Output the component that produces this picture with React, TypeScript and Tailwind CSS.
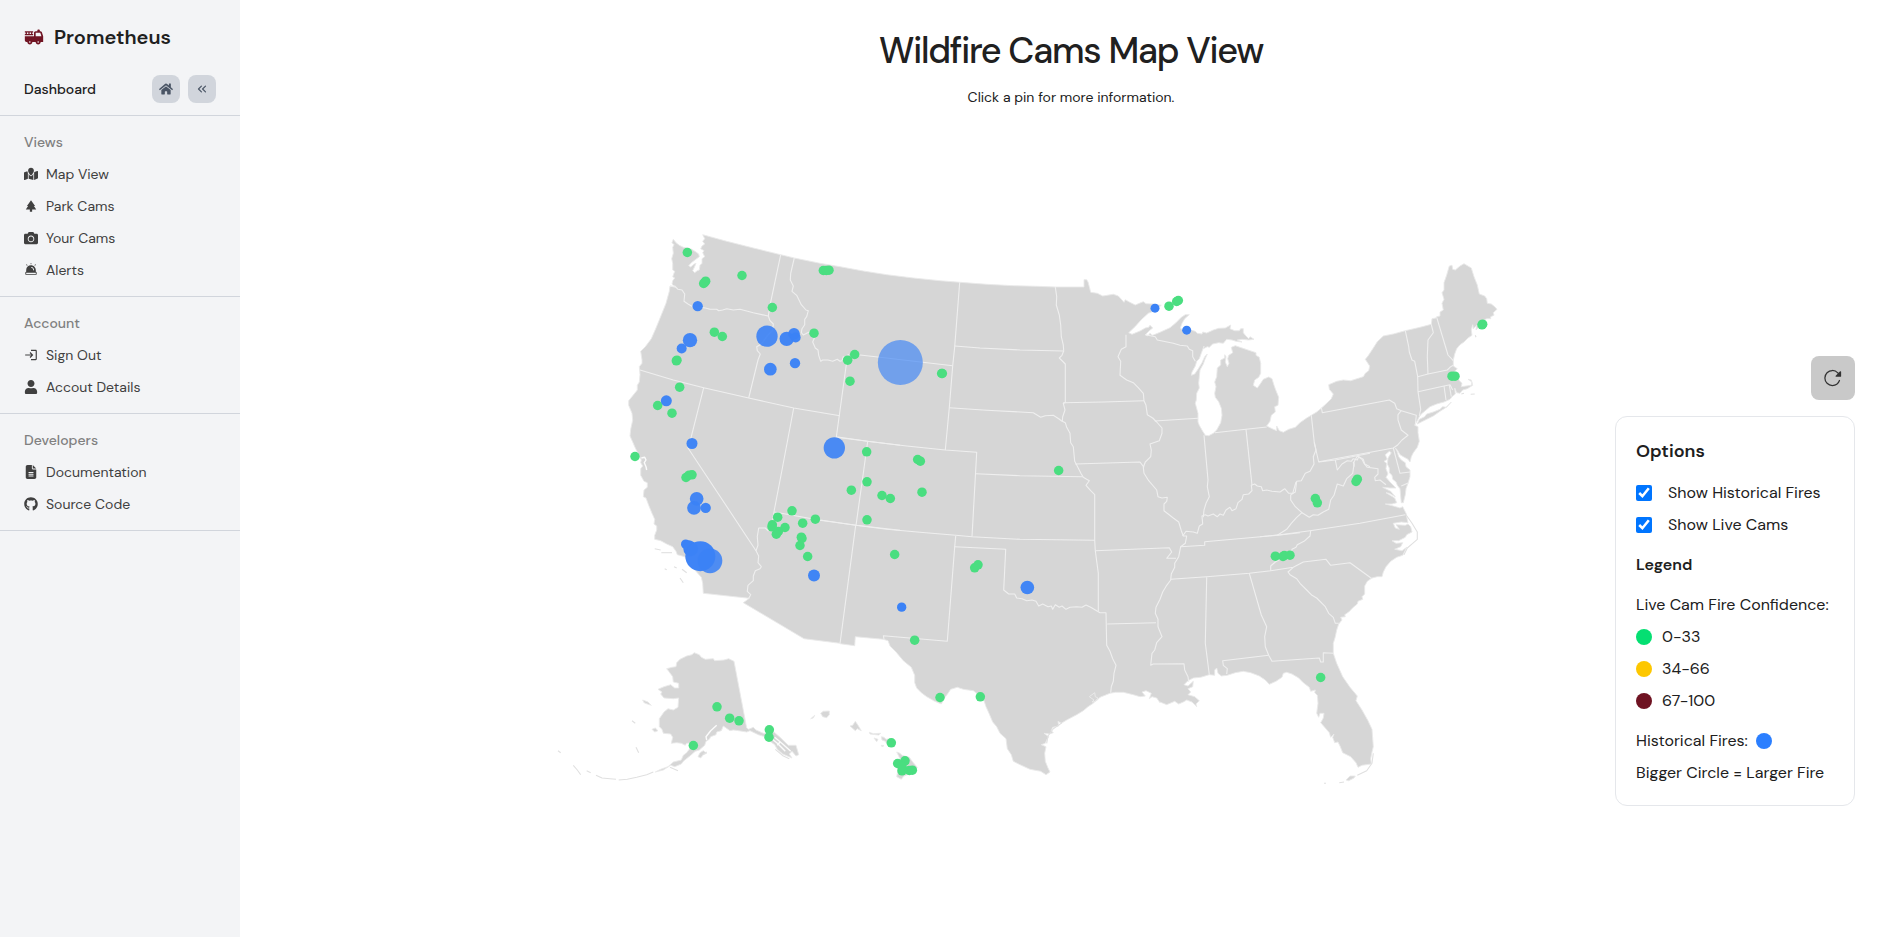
import type { ReactNode } from "react";
import type { IconType } from "react-icons";
import { FaCamera, FaGithub, FaHome, FaUser } from "react-icons/fa";
import { FaFileLines, FaMapLocation } from "react-icons/fa6";
import { FiChevronsLeft } from "react-icons/fi";
import { IoReload } from "react-icons/io5";
import { MdFireTruck, MdLogin, MdPark } from "react-icons/md";
import { PiSirenFill } from "react-icons/pi";

/* ---------- Map geometry ---------- */

// Survey tiles: every tile has its own origin on the map and stores
// coordinates at three units per map unit.
const TILES = {
  A: [540, 220],
  B: [540, 450],
  C: [820, 250],
  D: [820, 520],
  E: [1070, 260],
  F: [1260, 250],
  G: [1160, 500],
  H: [960, 280],
} as const;

type Tile = keyof typeof TILES;
type Run = [Tile, string];

function project(tile: Tile, x: number, y: number): [number, number] {
  const [ox, oy] = TILES[tile];
  return [ox + x / 3, oy + y / 3];
}

function toPath(runs: Run[], closed = false): string {
  const pts = runs.flatMap(([tile, s]) =>
    s.trim().split(/\s+/).map((p) => {
      const [x, y] = p.split(",").map(Number);
      return project(tile, x, y).map((v) => v.toFixed(1)).join(" ");
    })
  );
  return "M" + pts.join("L") + (closed ? "Z" : "");
}

const MAINLAND: Run[] = [
  ["A", "400,58 408,68 418,76 430,82 442,84 455,88 468,96 476,102 478,110 466,119 454,128 446,137 452,141 463,132 468,130 462,144 458,152 464,158 472,152 478,150 480,136 486,130 486,116 494,110 488,98 492,92 482,86 486,78 494,72 488,64 494,56 488,44 560,64 640,84 722,104 763,114 836,129"],
  ["C", "0,40 60,50 130,63 200,74 280,84 360,92 420,97 500,103 580,107 650,109 706,111 792,111 792,89 800,89 804,96 808,110 812,127 832,130 848,138 862,136 880,133 895,138 906,150 912,157 916,149 928,156 946,165 958,160 970,155 978,161 1000,162 1024,166 1000,184 985,190 965,208 945,230 926,248 936,253 960,243 976,234 986,232 990,226 998,234 988,242 976,254 984,258 990,250 996,256"],
  ["E", "250,225 270,217 300,203 318,188 334,172 346,164 358,164 344,176 336,190 331,204 338,210 362,210 376,214 382,220 396,222 398,216 410,219 430,210 446,205 466,204 482,195 480,206 494,212 508,212 512,206 520,206 520,218 526,226 536,236 540,230 552,238 536,240 516,238 502,240 516,246 498,244 486,240 470,238 460,250 446,248 428,252 418,262 412,260 400,266 402,258 394,280 388,296 380,304 376,318 366,336 364,346 374,342 384,328 396,308 404,290 412,282 404,300 400,312 390,330 388,350 386,370 388,384 380,400 379,420 376,430 384,460 384,486 388,496 398,514 406,526 416,527 430,520 440,510 452,488 456,466 454,445 446,425 436,412 434,400 438,380 434,366 440,350 442,324 452,315 452,300 464,294 464,284 468,290 466,306 472,320 477,310 473,296 476,286 488,278 484,262 496,257 510,262 540,272 558,278 558,286 568,292 572,310 572,340 566,352 554,360 550,376 562,384 572,370 580,358 596,351 606,356 612,376 618,392 626,412 624,436 614,440 616,456 604,466 600,484 590,498 606,506 620,512 620,498 628,512 640,517 656,508 676,502 690,488 710,474 724,466 740,456 752,446 770,430 784,416 790,402"],
  ["F", "208,418 206,404 230,394 250,390 272,392 298,384 310,380 316,370 326,362 329,348 316,328 324,318 336,300 352,275 370,258 400,252 436,242 480,232 514,223 516,206 528,204 530,200 540,198 540,186 550,180 546,160 552,148 546,128 552,120 552,98 560,75 568,48 576,46 578,58 586,60 600,48 612,41 634,54 642,80 652,105 658,132 674,138 680,146 682,160 694,162 704,170 711,178 700,188 702,196 692,200 692,206 680,206 664,214 656,232 648,240 650,226 640,236 638,224 634,240 636,256 624,264 612,276 600,284 590,296 584,312 580,330 580,348 592,356 584,364 596,376 596,390 606,400 604,410 618,408 634,406 636,396 624,388 634,390 638,406 622,416 608,420 600,430 590,428 584,414 586,432 576,440 570,448 552,456 530,462 510,470 496,482 484,492 478,500 472,512 464,526 474,530 474,548 478,574 472,592 460,608 454,620 450,636 444,628 430,620 420,614 412,600 406,594 412,606 416,620 424,630 436,638 438,650 450,660 450,680 444,700 438,716 436,734 430,758 424,758 422,740 420,716 412,706 408,696 398,688 396,676 388,668 388,654 382,642 384,624 394,608 388,604 376,614 382,628 372,634 380,640 378,656 384,672 378,682 390,696 400,706 408,714 390,714 368,712 392,724 406,740 388,730 378,728 404,744 410,758 396,762 376,762 400,768 420,774 428,770 438,790"],
  ["G", "740,50 744,68 724,66 700,70 706,84 718,88 708,74 736,76 744,72 752,80 756,96 740,104 736,112 716,122 696,122 708,130 728,128 722,140 704,148 726,152 740,142 732,158 728,166 710,172 692,184 678,200 670,216 666,230 652,230 636,234 622,244 614,258 614,282 606,290 608,298 594,304 592,312 580,322 566,336 554,344 556,350 542,352 546,360 536,372 530,390 526,410 520,430 520,460 530,490 548,530 570,562 592,588 588,602 606,630 624,662 636,688 640,740 636,756 632,776 634,792 606,796 594,802 588,788 572,770 548,758 540,738 534,726 524,728 518,712 522,702 512,712 508,698 496,684 482,668 490,654 492,640 480,640 476,652 470,640 474,610 472,586 464,578 466,570 452,574 448,562 430,548 416,534 396,522 380,517 370,520 366,532 348,544 328,553 316,540 298,528 272,518 250,514 226,518 202,526 184,528 174,520 170,504 164,510 164,526 148,524 122,532 100,534 84,542 72,554 84,558 100,544 98,560 84,566 92,576 84,584 104,590 118,602 108,612 110,620 96,606 80,600 70,606 56,612 44,604 20,614 0,606"],
  ["D", "1020,548 1010,534 996,530 988,536 994,520 978,512 966,516 976,528 960,530 940,524 910,517 886,517 870,520 840,532 828,544 816,546 822,540 808,530 824,518 826,530 834,534 820,550 804,560 790,572 770,584 740,600 724,610 714,604 716,618 698,622 694,632 700,638 688,642 672,640 686,650 680,660 676,670 664,674 678,680 674,700 676,724 684,744 690,756 678,764 662,754 630,748 600,734 580,724 574,704 562,686 558,656 540,640 530,620 518,606 508,582 498,560 490,536 470,520 460,512 430,508 412,502 392,508 384,520 372,536 364,552 344,544 320,530 304,518 290,504 284,488 284,466 274,442 250,422 228,396 210,378 204,362 190,358 106,350 104,377 60,371"],
  ["B", "900,580 792,566 610,458 628,445 490,430 488,400 484,382 468,364 450,345 434,320 412,314 408,304 398,290 380,282 362,272 344,268 344,256 350,240 350,228 342,222 344,208 336,190 326,166 318,144 310,140 312,120 322,112 322,98 312,94 302,76 302,56 308,48 302,38"],
  ["A", "304,720 294,700 286,684 278,666 270,648 272,628 278,600 276,580 266,556 266,542 284,520 292,510 292,496 298,486 300,464 298,440 306,430 306,420 302,394 316,380 334,356 348,324 366,280 378,250 388,214 390,198 406,202 396,192 398,182 404,174 398,170 404,154 398,150 398,130 395,116 400,100 398,82 402,74 396,68"],
];

const ALASKA: Run[] = [
  ["B", "462,608 478,614 484,622 496,628 520,626 524,632 552,630 566,626 582,634 620,834 626,838 640,832 648,840 670,850 688,852 702,846 720,862 745,886 768,886 776,914 768,918 756,904 748,912 756,924 742,918 728,912 712,898 704,884 690,874 680,862 655,854 630,842 620,846 596,842 580,840 570,842 550,828 544,842 530,846 528,854 512,860 508,868 498,874 494,886 478,900 466,904 452,916 430,934 424,942 404,950 392,946 370,960 346,966 362,958 384,950 400,936 424,930 430,916 440,908 452,892 464,878 440,880 436,886 424,880 410,878 394,880 398,862 392,852 370,850 366,838 358,830 358,806 372,786 384,776 400,780 414,772 416,744 400,746 372,744 362,732 366,726 354,718 372,710 392,704 404,714 416,714 416,700 400,696 398,680 386,664 380,656 396,652 408,650 410,638 420,628 440,618 456,614"],
];

const ISLANDS: Run[][] = [
  // Long Island
  [["F", "472,522 478,508 494,500 500,492 520,486 540,478 548,470 560,472 574,456 556,474 540,484 520,498 500,508 488,514"]],
  // Florida Keys
  [["G", "558,840 570,828 586,828 582,834 566,842"]],
  // Kodiak and the Bering Sea
  [["B", "474,920 480,908 490,902 500,910 490,914 482,924"]],
  [["B", "308,750 324,756 334,766 322,762 312,758"]],
  [["B", "336,838 346,834 354,842 344,846"]],
  // Hawaii
  [["D", "2,580 10,574 28,573 28,584 20,593 8,590"]],
  [["B", "812,806 824,796 820,804"]],
  [["D", "90,618 98,616 106,604 114,616 124,632 112,626 106,632"]],
  [["D", "148,637 160,641 182,640 176,645 150,642"]],
  [["D", "162,654 174,658 170,665"]],
  [["D", "184,650 192,652 198,658 210,656 222,672 204,678 196,664 186,660"]],
  [["D", "184,676 192,677 186,680"]],
  [["D", "230,696 240,700 246,706 268,712 278,726 292,742 282,756 262,764 252,768 244,778 230,770 234,750 226,736 240,716"]],
];

const FRAGMENTS: Run[][] = [
  [["B", "340,966 320,974 290,982 262,988 236,990"]],
  [["B", "228,988 210,986 186,984 168,976"]],
  [["B", "152,968 140,962"]],
  [["B", "122,974 112,960 100,946"]],
  [["B", "62,908 54,902"]],
  [["B", "276,812 286,820"]],
  [["B", "288,892 296,908"]],
  [["B", "344,296 362,300"]],
  [["B", "364,308 396,308"]],
  [["B", "374,356 380,359"]],
  [["B", "402,350 410,354"]],
  [["B", "426,358 440,368"]],
  [["B", "420,384 430,398"]],
  [["B", "390,952 414,962"]],
  [["B", "488,914 500,906"]],
  [["B", "706,898 730,918 748,926"]],
  [["F", "604,432 612,430"]],
  [["F", "632,433 644,432"]],
  [["F", "646,256 648,262"]],
  [["G", "738,44 756,70 772,96 772,118 758,130 742,144 732,164"]],
  [["G", "640,760 636,790 620,812 592,826"]],
  [["G", "538,848 552,846"]],
  [["G", "492,850 498,850"]],
  [["D", "726,608 700,626 684,648 680,670"]],
];

// Narrow water cut into the land shapes
const INLETS: Run[][] = [
  [["A", "304,714 314,712 318,720 313,728 318,740 320,750"]],
  [["B", "530,826 512,842 498,860 500,870"]],
  [["B", "690,862 712,880 736,904"]],
  [["B", "704,862 728,882 752,904"]],
  [["B", "720,876 712,886"]],
];

const BORDERS: Run[][] = [
  [["A", "390,198 404,198 414,208 426,210 434,222 432,244 444,252 458,260 480,262 496,264 510,268 530,268 536,272 548,270 560,266 580,270 600,268 640,278 684,288"]],
  [["A", "722,104 690,256 685,288 690,302 700,312 698,330 680,350 664,372 650,380 652,392 661,402 654,420 626,534"]],
  [["A", "763,114 752,160 751,180 760,198 756,214 770,226 784,254 798,270 805,272 800,290 794,298 794,314 786,326 784,338 790,345 800,340 812,334 824,352 818,366 826,384 834,390 836,406 842,424 848,420 864,420 878,424 892,418 900,424 906,422 910,410 920,412"]],
  [["A", "925,402 918,440 889,652 982,664 1080,676"]],
  [["A", "300,450 400,480 491,503 626,534 761,564 900,587"]],
  [["A", "491,503 454,650 444,684"], ["B", "648,302 656,318 654,338 664,350 660,356 646,362 640,378 640,392 624,406 622,424 632,434 626,445"]],
  [["A", "761,564 726,750"], ["B", "703,180 694,236 684,242 676,234 656,234 652,260 654,286 648,302"]],
  [["B", "703,186 820,207 948,226 1080,241"]],
  [["C", "143,574 130,670 108,826"], ["D", "107,16 60,371"]],
  [["C", "100,313 180,322 398,347"]],
  [["C", "419,97 404,290 398,347 388,473 376,600"]],
  [["C", "404,288 480,294 600,300 730,303"]],
  [["C", "706,111 710,140 709,165 718,195 722,225 724,260 730,285 731,303 726,316 718,324 736,342 736,458"]],
  [["C", "388,473 500,481 640,488 662,502 676,497 700,496 716,506 726,514"]],
  [["C", "736,458 730,460 735,480 728,500 727,514 736,518 740,532 750,550 752,578 760,590 764,634 770,645 784,672 790,682 800,688 808,692 798,706 812,722 824,734 824,868"], ["D", "824,61 826,92 835,160 835,274"]],
  [["C", "730,458 850,456 972,452"]],
  [["C", "468,671 600,677 788,680"]],
  [["C", "48,560 143,574 260,588 376,600 470,607 456,860"]],
  [["C", "0,811 108,826 200,838 300,847 407,856 456,860"], ["D", "600,58 824,61"]],
  [["D", "407,48 404,80 382,364 190,347 192,357"]],
  [["D", "404,80 557,88 551,210 566,222 584,222 590,234 606,236 620,242 636,240 648,244 656,258 668,252 684,260 694,258 698,268 706,254 718,262 726,258 738,268 750,262 770,260 786,262 798,255 812,262 826,270 840,278 858,278 860,376 870,394 878,416 888,436 882,460 880,484 874,500 872,518"]],
  [["D", "862,312 1008,308"]],
  [["D", "826,92 1048,83 1055,96 1040,115 1068,115"]],
  [["H", "498,164 498,200 484,208 474,230 482,244 480,286 500,300 520,308 534,322 550,340 552,362 558,376 562,404 578,414 590,426 606,444 606,460 598,482 570,492 574,510 572,530 556,546 550,562 552,580 566,602 590,630 594,650 606,654 622,652 620,664 612,672 612,692 640,714 656,726 664,752 670,768 680,768 676,790 662,800 656,830 644,850 644,862 634,882 632,900 620,916 608,936 600,958"], ["D", "1008,262 1006,280 1014,298 1014,320 1026,350 1010,368 1004,390 996,400 992,436"], ["G", "-20,492 72,491 74,510 84,530 86,546"]],
  [["H", "346,552 540,546 552,562"]],
  [["H", "584,423 714,415"]],
  [["H", "732,466 744,600 742,620 748,650 738,670 732,690 730,712"]],
  [["H", "668,768 678,754 700,756 712,760 718,738 728,732 726,708 736,704 744,708 760,702 772,710 780,702 790,706 798,690 810,682 816,692 828,686 834,668 846,658 850,644 866,642 876,632 874,616 884,612 892,618 904,620 908,632 920,630 936,634 960,636 974,626 986,640 998,640 1008,606"]],
  [["H", "858,448 876,616"]],
  [["H", "764,458 858,448 920,441"]],
  [["H", "556,164 586,170 592,180 640,190 660,196 682,198 688,208 698,212 698,230 706,244"]],
  [["H", "662,800 734,796 734,785 960,765 1020,758"]],
  [["E", "662,704 676,696 680,664 694,662 706,640 720,634 732,612 730,590 738,570 733,548"]],
  [["E", "724,466 733,548 746,606 796,600 900,580"]],
  [["E", "662,704 662,720 676,740 696,758 680,772 664,790 650,808 622,826"]],
  [["E", "696,758 718,772 730,764 744,766 760,756 776,748 782,720 792,706 802,672 820,678 830,656 848,640 852,614 850,606"]],
  [["E", "796,600 802,630 816,612 832,602 844,604 850,596 862,600 866,590 880,598 884,612 900,620"]],
  [["F", "184,472 187,488 388,450 404,460 410,476 424,482 414,494 414,510 424,540 444,556 426,570 412,586 400,594 177,635"]],
  [["F", "424,482 469,496 466,526"]],
  [["F", "400,594 420,670 450,666"]],
  [["F", "424,708 446,698"]],
  [["F", "282,650 282,636 292,618 306,628 312,640 322,652 354,656 354,672 344,682 346,692 360,690 378,704"]],
  [["F", "436,242 446,290 448,306 456,330 464,334 473,380 474,425 482,478 478,498"]],
  [["F", "514,223 520,248 504,270 502,320 504,372"]],
  [["F", "530,202 564,315 580,332"]],
  [["F", "473,380 504,372 562,360 572,350 580,346"]],
  [["F", "474,425 552,408 570,404 578,420"]],
  [["F", "552,408 558,450"]],
  [["F", "568,405 574,440"]],
  [["F", "0,860 60,854 150,842 300,820 436,794"]],
  [["F", "152,842 150,858 132,874 112,884 108,892 96,898"], ["G", "396,150 370,172 346,186 332,198 332,212"]],
  [["G", "32,238 140,230 268,220 332,212 400,202 430,186 498,178 512,196 570,188 636,236"]],
  [["G", "140,232 136,430 148,524"]],
  [["G", "268,220 304,345 320,380 314,410 316,440 326,466 336,484 478,474 482,486 490,486 490,458 520,460"]],
  [["G", "326,466 188,482 190,496 202,506 200,522"]],
  [["G", "400,202 384,216 390,224 410,236 420,250 440,270 456,286 470,294 496,320 506,340 520,352 526,370 536,370"]],
];

/* ---------- Pins ---------- */

const CAMS: Run[] = [
  ["A", "442,97 497,183 491,190 494,187 606,166 850,151 859,151 867,150 697,262 523,336 547,349 822,339 409,422 411,420 419,501 353,556 396,579 285,709 944,403 923,420 930,483 980,695"],
  ["B", "438,82 447,75 456,74 934,120 981,95 1026,136 1051,145 981,209 756,182 713,201 697,224 696,230 735,232 715,244 709,252 788,219 826,207 784,261 786,265 780,286 803,319 1064,313 531,770 569,804 597,812 688,839 687,861 460,886"],
  ["C", "365,370 367,370 293,628 301,633 306,726 716,661"],
  ["D", "464,143 474,134 284,360 360,532 481,530 214,668 233,730 255,722 246,752 268,751 277,750 246,738"],
  ["E", "297,138 320,124 325,121 736,715 742,728 862,657 858,664"],
  ["F", "668,222 666,224 576,378 585,378"],
  ["G", "346,168 369,169 373,166 390,165 482,532"],
];

type Fire = [tile: Tile, x: number, y: number, radius: number, opacity: number];

const FIRES: Fire[] = [
  ["C", 241, 337, 67.5, 0.65],
  ["A", 473, 258, 15.5, 0.97],
  ["A", 450, 360, 21.5, 0.95],
  ["A", 425, 385, 15, 0.97],
  ["A", 681, 348, 32, 0.9],
  ["A", 740, 356, 21.5, 0.95],
  ["A", 762, 341, 17.5, 0.96],
  ["A", 767, 352, 15, 0.97],
  ["A", 765, 429, 15.5, 0.97],
  ["A", 691, 447, 19, 0.96],
  ["A", 379, 542, 16.5, 0.97],
  ["A", 456, 670, 16.5, 0.97],
  ["A", 883, 683, 32, 0.9],
  ["B", 470, 146, 20.5, 0.95],
  ["B", 462, 173, 20.5, 0.95],
  ["B", 497, 173, 15.5, 0.97],
  ["B", 437, 282, 14, 1],
  ["B", 447, 287, 17, 1],
  ["B", 452, 296, 22, 1],
  ["B", 510, 332, 37, 0.88],
  ["B", 481, 318, 45, 0.98],
  ["B", 822, 376, 18, 0.97],
  ["D", 622, 202, 20.5, 0.96],
  ["D", 245, 261, 14, 1],
  ["E", 255, 144, 13.5, 1],
  ["E", 350, 210, 13.5, 1],
];

function FireMap() {
  return (
    <svg width={1062} height={590} viewBox="540 220 1062 590" className="shrink-0" role="img" aria-label="Wildfire cams">
      <g fill="#d6d6d6" stroke="#eaeaea" strokeWidth={0.9} strokeLinejoin="round">
        <path d={toPath(MAINLAND, true)} />
        <path d={toPath(ALASKA, true)} />
        {ISLANDS.map((runs, i) => (
          <path key={i} d={toPath(runs, true)} />
        ))}
      </g>
      <g fill="none" strokeLinejoin="round">
        {FRAGMENTS.map((runs, i) => (
          <path key={i} d={toPath(runs)} stroke="#e0e0e0" strokeWidth={1.1} />
        ))}
        {INLETS.map((runs, i) => (
          <path key={i} d={toPath(runs)} stroke="#fbfbfb" strokeWidth={1.4} />
        ))}
        {BORDERS.map((runs, i) => (
          <path key={i} d={toPath(runs)} stroke="#efefef" strokeWidth={1.1} />
        ))}
      </g>
      <g fill="#4ade80">
        {CAMS.flatMap(([tile, s]) =>
          s.split(" ").map((p) => {
            const [x, y] = p.split(",").map(Number);
            const [cx, cy] = project(tile, x, y + 0.5);
            return <circle key={tile + p} cx={cx} cy={cy} r={4.75} />;
          })
        )}
      </g>
      <g fill="#3b82f6">
        {FIRES.map(([tile, x, y, r, opacity]) => {
          const [cx, cy] = project(tile, x, y + 0.5);
          return <circle key={`${tile}${x}-${y}`} cx={cx} cy={cy} r={r / 3} opacity={opacity} />;
        })}
      </g>
    </svg>
  );
}

/* ---------- Sidebar ---------- */

const SECTIONS: { title: string; items: [IconType, string][] }[] = [
  {
    title: "Views",
    items: [
      [FaMapLocation, "Map View"],
      [MdPark, "Park Cams"],
      [FaCamera, "Your Cams"],
      [PiSirenFill, "Alerts"],
    ],
  },
  {
    title: "Account",
    items: [
      [MdLogin, "Sign Out"],
      [FaUser, "Accout Details"],
    ],
  },
  {
    title: "Developers",
    items: [
      [FaFileLines, "Documentation"],
      [FaGithub, "Source Code"],
    ],
  },
];

function IconButton({ icon: Icon }: { icon: IconType }) {
  return (
    <button className="flex size-7 items-center justify-center rounded-lg bg-[#d1d5dc] text-[#4a5565]">
      <Icon size={14} />
    </button>
  );
}

function Sidebar() {
  return (
    <aside className="flex w-60 shrink-0 flex-col bg-gray-100 pt-[23px] text-sm text-[#404040]">
      <div className="flex h-7 items-center gap-2.5 px-6 text-xl font-semibold text-[#202020]">
        <MdFireTruck size={20} className="text-[#701423]" />
        Prometheus
      </div>
      <div className="mt-6 flex items-center gap-2 border-b border-gray-300 px-6 pb-3">
        <span className="flex-1 font-medium text-[#202020]">Dashboard</span>
        <IconButton icon={FaHome} />
        <IconButton icon={FiChevronsLeft} />
      </div>
      {SECTIONS.map((section) => (
        <nav key={section.title} className="flex flex-col gap-3 border-b border-gray-300 px-6 py-4">
          <h2 className="font-medium text-[#808080]">{section.title}</h2>
          {section.items.map(([Icon, label]) => (
            <a key={label} className="flex items-center gap-2">
              <Icon size={14} />
              {label}
            </a>
          ))}
        </nav>
      ))}
    </aside>
  );
}

/* ---------- Options panel ---------- */

function Toggle({ children }: { children: ReactNode }) {
  return (
    <label className="flex items-center gap-4">
      <input type="checkbox" defaultChecked className="size-4" />
      {children}
    </label>
  );
}

function OptionsPanel() {
  return (
    <div className="flex w-60 flex-col items-end gap-4">
      <button className="flex size-11 items-center justify-center rounded-lg bg-[#c9c9c9] text-[#333333]">
        <IoReload size={20} />
      </button>
      <section className="flex w-full flex-col gap-4 rounded-xl border border-gray-200 p-5 text-base">
        <h2 className="text-lg leading-7 font-semibold">Options</h2>
        <div className="flex flex-col gap-2">
          <Toggle>Show Historical Fires</Toggle>
          <Toggle>Show Live Cams</Toggle>
        </div>
        <h3 className="font-semibold">Legend</h3>
        <div className="flex flex-col gap-2">
          <p className="whitespace-nowrap">Live Cam Fire Confidence:</p>
          <p className="flex items-center gap-2.5">
            <span className="size-4 rounded-full bg-[#05df72]" />
            0-33
          </p>
          <p className="flex items-center gap-2.5">
            <span className="size-4 rounded-full bg-[#fdc700]" />
            34-66
          </p>
          <p className="flex items-center gap-2.5">
            <span className="size-4 rounded-full bg-[#6f1322]" />
            67-100
          </p>
        </div>
        <div className="flex flex-col gap-2">
          <p className="flex items-center gap-2">
            Historical Fires:
            <span className="size-4 rounded-full bg-[#2b7fff]" />
          </p>
          <p className="whitespace-nowrap">Bigger Circle = Larger Fire</p>
        </div>
      </section>
    </div>
  );
}

export default function App() {
  return (
    <div className="flex h-screen overflow-hidden bg-white font-['DM_Sans','Inter',sans-serif] text-[#202020]">
      <Sidebar />
      <main className="flex flex-1 flex-col pt-[31px]">
        <header className="flex flex-col items-center gap-4">
          <h1 className="text-4xl font-medium tracking-[-0.035em]">Wildfire Cams Map View</h1>
          <p className="text-sm">Click a pin for more information.</p>
        </header>
        <div className="mt-[113px] flex">
          <div className="w-[300px] shrink-0" />
          <FireMap />
          <div className="mt-[136px] ml-[13px]">
            <OptionsPanel />
          </div>
        </div>
      </main>
    </div>
  );
}
